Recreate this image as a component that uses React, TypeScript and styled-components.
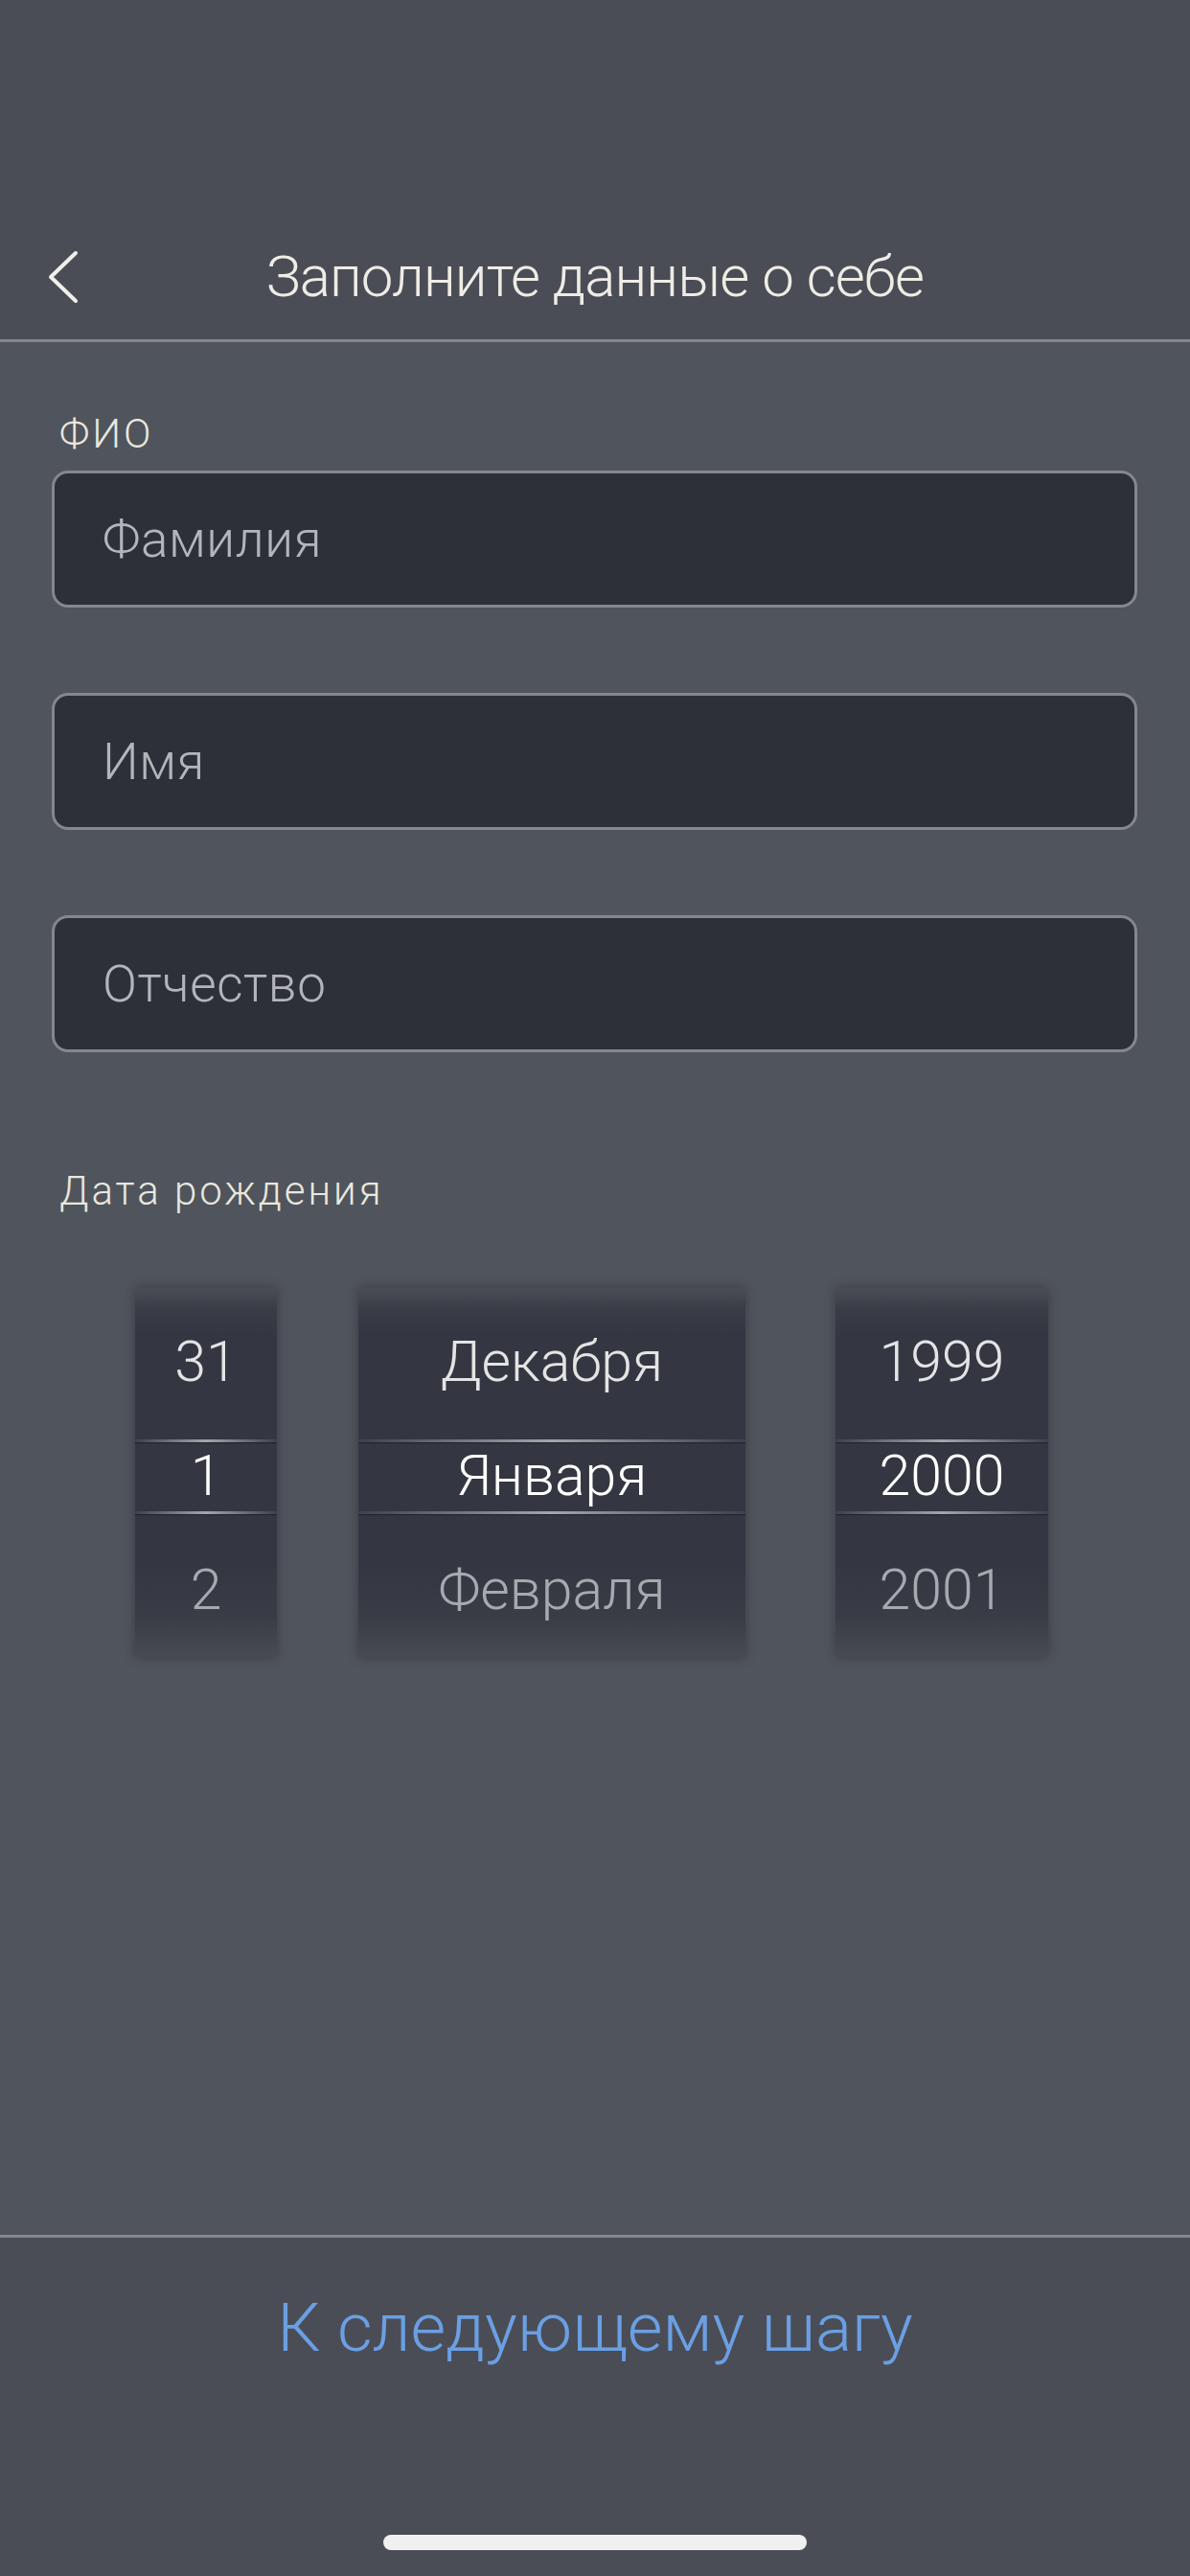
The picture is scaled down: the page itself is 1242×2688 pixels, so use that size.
import React from "react";
import styled, { createGlobalStyle } from "styled-components";

const font = `Roboto, "Liberation Sans", Arial, sans-serif`;

const GlobalStyle = createGlobalStyle`
  html, body {
    margin: 0;
    padding: 0;
    background: #50545c;
  }
  * {
    box-sizing: border-box;
  }
`;

const Page = styled.div`
  width: 1242px;
  height: 2688px;
  display: flex;
  flex-direction: column;
  font-family: ${font};
  font-weight: 300;
  background: #50545c;
  overflow: hidden;
`;

const Header = styled.header`
  background: #4a4d56;
  padding-top: 223px;
  border-bottom: 3px solid #85878b;
`;

const NavBar = styled.div`
  height: 131px;
  display: grid;
  grid-template-columns: 1fr auto 1fr;
  align-items: center;
`;

const BackButton = styled.button`
  justify-self: start;
  margin-left: 50px;
  padding: 0;
  border: 0;
  background: none;
  display: flex;
  cursor: pointer;
`;

const Title = styled.h1`
  margin: 0;
  font-size: 60px;
  font-weight: 300;
  color: #eeece4;
  letter-spacing: -0.9px;
`;

const Content = styled.main`
  flex: 1;
  padding: 0 55px 0 54px;
  display: flex;
  flex-direction: column;
`;

const Label = styled.div<{ top: number; bottom: number }>`
  margin-top: ${(p) => p.top}px;
  margin-bottom: ${(p) => p.bottom}px;
  padding-left: 8px;
  font-size: 42px;
  line-height: 50px;
  color: #e9e7df;
  letter-spacing: 3px;
`;

const Field = styled.input`
  display: block;
  width: 100%;
  height: 143px;
  margin-bottom: 89px;
  padding: 0 0 0 50px;
  border: 3px solid #85878c;
  border-radius: 17px;
  background: #2d3039;
  color: #ffffff;
  font-family: ${font};
  font-weight: 300;
  font-size: 53px;
  letter-spacing: 0.6px;
  outline: 0;
  &::placeholder {
    color: #b3b5bb;
  }
  &:last-of-type {
    margin-bottom: 0;
  }
`;

const Picker = styled.div`
  margin-top: 76px;
  padding-left: 87px;
  display: flex;
`;

const Wheel = styled.div<{ width: number; gap: number }>`
  position: relative;
  width: ${(p) => p.width}px;
  height: 385px;
  margin-right: ${(p) => p.gap}px;
  padding: 17px 0 11px;
  display: flex;
  flex-direction: column;
  background: linear-gradient(
    to bottom,
    #4a4d55 0px,
    #3a3d46 22px,
    #343741 48px,
    #343741 290px,
    #3a3d46 345px,
    #484b53 385px
  );
  box-shadow: 0 0 10px rgba(30, 32, 38, 0.45);

  &::before,
  &::after {
    content: "";
    position: absolute;
    left: 0;
    right: 0;
    height: 3px;
    background: linear-gradient(
      to right,
      rgba(150, 153, 160, 0.1),
      #a2a5ab 50%,
      rgba(150, 153, 160, 0.1)
    );
    box-shadow: 0 1px 1px rgba(20, 22, 28, 0.6);
  }
  &::before {
    top: 158px;
  }
  &::after {
    top: 233px;
  }
`;

const Item = styled.div<{ tone: "prev" | "current" | "next" }>`
  height: 119px;
  display: flex;
  align-items: center;
  justify-content: center;
  font-size: 59px;
  color: ${(p) =>
    p.tone === "current" ? "#ffffff" : p.tone === "prev" ? "#e4e4e4" : "#a6a9ae"};
`;

const Footer = styled.footer`
  background: #4a4d56;
  border-top: 3px solid #85878b;
  display: flex;
  flex-direction: column;
  align-items: center;
  height: 356px;
`;

const NextButton = styled.button`
  height: 186px;
  width: 100%;
  border: 0;
  background: none;
  font-family: ${font};
  font-weight: 300;
  font-size: 71px;
  color: #6b9fe3;
  cursor: pointer;
`;

const HomeIndicator = styled.div`
  margin-top: 124px;
  width: 442px;
  height: 16px;
  border-radius: 8px;
  background: #f0f0f0;
`;

const wheels = [
  { width: 148, gap: 85, items: ["31", "1", "2"] },
  { width: 404, gap: 94, items: ["Декабря", "Января", "Февраля"] },
  { width: 222, gap: 0, items: ["1999", "2000", "2001"] },
];

const tones = ["prev", "current", "next"] as const;

export default function App() {
  return (
    <Page>
      <GlobalStyle />
      <Header>
        <NavBar>
          <BackButton aria-label="Назад">
            <svg width="32" height="56" viewBox="0 0 32 56" fill="none">
              <path
                d="M29 3 L3 28 L29 53"
                stroke="#f0efe8"
                strokeWidth="4"
                strokeLinecap="round"
                strokeLinejoin="round"
              />
            </svg>
          </BackButton>
          <Title>Заполните данные о себе</Title>
          <div />
        </NavBar>
      </Header>
      <Content>
        <Label top={71} bottom={13}>
          ФИО
        </Label>
        <Field placeholder="Фамилия" />
        <Field placeholder="Имя" />
        <Field placeholder="Отчество" />
        <Label top={120} bottom={0}>
          Дата рождения
        </Label>
        <Picker>
          {wheels.map((w, i) => (
            <Wheel key={i} width={w.width} gap={w.gap}>
              {w.items.map((text, j) => (
                <Item key={text} tone={tones[j]}>
                  {text}
                </Item>
              ))}
            </Wheel>
          ))}
        </Picker>
      </Content>
      <Footer>
        <NextButton>К следующему шагу</NextButton>
        <HomeIndicator />
      </Footer>
    </Page>
  );
}
